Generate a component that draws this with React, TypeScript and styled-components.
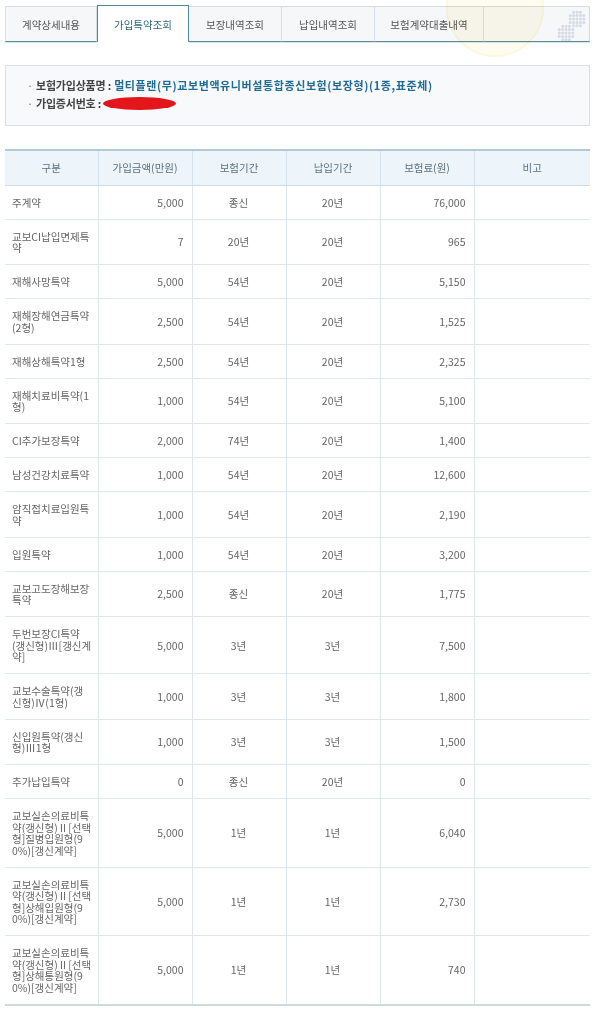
import React from "react";
import styled, { createGlobalStyle } from "styled-components";

const GlobalStyle = createGlobalStyle`
  html, body { margin: 0; padding: 0; background: #ffffff; }
  body { font-family: "Noto Sans CJK KR", "Noto Sans", sans-serif; color: #666; }
  * { box-sizing: border-box; }
`;

const Page = styled.div`
  position: relative;
  width: 600px;
  padding: 5px 10px 0 5px;
`;

const Deco = styled.svg`
  position: absolute;
  left: 420px;
  top: 0;
  width: 180px;
  height: 64px;
  pointer-events: none;
  mix-blend-mode: multiply;
`;

const TabBar = styled.div`
  display: flex;
  align-items: flex-end;
  height: 37px;
`;

const Tab = styled.div<{ $w?: number; $active?: boolean }>`
  flex: ${(p) => (p.$w ? `0 0 ${p.$w}px` : "1 1 auto")};
  height: ${(p) => (p.$active ? "37px" : "36px")};
  display: flex;
  align-items: center;
  justify-content: center;
  font-size: 10.5px;
  color: ${(p) => (p.$active ? "#2f6878" : "#555")};
  background: ${(p) => (p.$active ? "#ffffff" : "rgba(244,246,248,0.85)")};
  border-top: 1px solid ${(p) => (p.$active ? "#4f8a97" : "#d3dde4")};
  border-right: 1px solid ${(p) => (p.$active ? "#4f8a97" : "#d3dde4")};
  border-left: ${(p) => (p.$active ? "1px solid #4f8a97" : "none")};
  border-bottom: ${(p) => (p.$active ? "none" : "1px solid #5b8f9c")};
  box-shadow: ${(p) => (p.$active ? "none" : "0 1px 0 #d7e6ea")};
  &:first-child { border-left: 1px solid #d3dde4; }
`;

const InfoBox = styled.div`
  margin-top: 23px;
  height: 61px;
  border: 1px solid #d9dfe5;
  background: #f8f9fb;
  padding: 10px 20px 12px 21px;
`;

const InfoLine = styled.div`
  display: flex;
  align-items: center;
  height: 18px;
  font-size: 11px;
  font-weight: 700;
  white-space: nowrap;
`;

const Bullet = styled.span`
  width: 9px;
  color: #666;
  font-weight: 400;
`;

const Label = styled.span`
  color: #444;
  letter-spacing: -0.2px;
  margin-right: 3px;
`;

const Value = styled.span`
  color: #1f6b93;
  letter-spacing: 0.6px;
`;

const Redact = styled.span`
  display: inline-block;
  width: 73px;
  height: 13px;
  margin-left: -1px;
  border-radius: 50%;
  background: #e3161c;
`;

const Table = styled.table`
  margin-top: 23px;
  width: 585px;
  border-collapse: collapse;
  table-layout: fixed;
  font-size: 10.5px;
  border-bottom: 2px solid #cfd9e0;
`;

const Th = styled.th`
  height: 35px;
  padding: 0;
  font-weight: 400;
  color: #5e7080;
  background: #edf4fa;
  border-top: 2px solid #b3c9d8;
  border-bottom: 1px solid #cddce7;
  border-right: 1px solid #d5e2ec;
  &:last-child { border-right: none; }
`;

const Td = styled.td<{ $align: "left" | "right" | "center" }>`
  padding: 11px 8px 10.5px 7px;
  line-height: 11.5px;
  text-align: ${(p) => p.$align};
  vertical-align: middle;
  color: #666;
  white-space: nowrap;
  border-bottom: 1px solid #e0e8ef;
  border-right: 1px solid #dde6ee;
  &:last-child { border-right: none; }
`;

type Row = { name: string[]; amount: string; term: string; pay: string; premium: string };

const rows: Row[] = [
  { name: ["주계약"], amount: "5,000", term: "종신", pay: "20년", premium: "76,000" },
  { name: ["교보CI납입면제특", "약"], amount: "7", term: "20년", pay: "20년", premium: "965" },
  { name: ["재해사망특약"], amount: "5,000", term: "54년", pay: "20년", premium: "5,150" },
  { name: ["재해장해연금특약", "(2형)"], amount: "2,500", term: "54년", pay: "20년", premium: "1,525" },
  { name: ["재해상해특약1형"], amount: "2,500", term: "54년", pay: "20년", premium: "2,325" },
  { name: ["재해치료비특약(1", "형)"], amount: "1,000", term: "54년", pay: "20년", premium: "5,100" },
  { name: ["CI추가보장특약"], amount: "2,000", term: "74년", pay: "20년", premium: "1,400" },
  { name: ["남성건강치료특약"], amount: "1,000", term: "54년", pay: "20년", premium: "12,600" },
  { name: ["암직접치료입원특", "약"], amount: "1,000", term: "54년", pay: "20년", premium: "2,190" },
  { name: ["입원특약"], amount: "1,000", term: "54년", pay: "20년", premium: "3,200" },
  { name: ["교보고도장해보장", "특약"], amount: "2,500", term: "종신", pay: "20년", premium: "1,775" },
  { name: ["두번보장CI특약", "(갱신형)Ⅲ[갱신계", "약]"], amount: "5,000", term: "3년", pay: "3년", premium: "7,500" },
  { name: ["교보수술특약(갱", "신형)Ⅳ(1형)"], amount: "1,000", term: "3년", pay: "3년", premium: "1,800" },
  { name: ["신입원특약(갱신", "형)Ⅲ1형"], amount: "1,000", term: "3년", pay: "3년", premium: "1,500" },
  { name: ["추가납입특약"], amount: "0", term: "종신", pay: "20년", premium: "0" },
  { name: ["교보실손의료비특", "약(갱신형)Ⅱ[선택", "형]질병입원형(9", "0%)[갱신계약]"], amount: "5,000", term: "1년", pay: "1년", premium: "6,040" },
  { name: ["교보실손의료비특", "약(갱신형)Ⅱ[선택", "형]상해입원형(9", "0%)[갱신계약]"], amount: "5,000", term: "1년", pay: "1년", premium: "2,730" },
  { name: ["교보실손의료비특", "약(갱신형)Ⅱ[선택", "형]상해통원형(9", "0%)[갱신계약]"], amount: "5,000", term: "1년", pay: "1년", premium: "740" },
];

const tabs = [
  { label: "계약상세내용", w: 92 },
  { label: "가입특약조회", w: 92, active: true },
  { label: "보장내역조회", w: 93 },
  { label: "납입내역조회", w: 93 },
  { label: "보험계약대출내역", w: 109 },
];

const colWidths = [93, 94, 94, 94, 94, 116];
const headers = ["구분", "가입금액(만원)", "보험기간", "납입기간", "보험료(원)", "비고"];

const dots = (cx: number, cy: number) => {
  const out: React.ReactElement[] = [];
  for (let i = -2; i <= 2; i++) {
    for (let j = -2; j <= 2; j++) {
      if (i * i + j * j > 5) continue;
      out.push(<circle key={`${cx}-${i}-${j}`} cx={cx + i * 3.4} cy={cy + j * 3.4} r={1.5} fill="#dde3ea" />);
    }
  }
  return out;
};

export default function App() {
  return (
    <>
      <GlobalStyle />
      <Page>
        <TabBar>
          {tabs.map((t) => (
            <Tab key={t.label} $w={t.w} $active={t.active}>
              {t.label}
            </Tab>
          ))}
          <Tab />
        </TabBar>

        <InfoBox>
          <InfoLine>
            <Bullet>·</Bullet>
            <Label>보험가입상품명 :</Label>
            <Value>멀티플랜(무)교보변액유니버설통합종신보험(보장형)(1종,표준체)</Value>
          </InfoLine>
          <InfoLine>
            <Bullet>·</Bullet>
            <Label>가입증서번호 :</Label>
            <Redact />
          </InfoLine>
        </InfoBox>

        <Table>
          <colgroup>
            {colWidths.map((w, i) => (
              <col key={i} style={{ width: w }} />
            ))}
          </colgroup>
          <thead>
            <tr>
              {headers.map((h) => (
                <Th key={h}>{h}</Th>
              ))}
            </tr>
          </thead>
          <tbody>
            {rows.map((r, idx) => (
              <tr key={idx}>
                <Td $align="left">
                  {r.name.map((l, i) => (
                    <React.Fragment key={i}>
                      {i > 0 && <br />}
                      {l}
                    </React.Fragment>
                  ))}
                </Td>
                <Td $align="right">{r.amount}</Td>
                <Td $align="center">{r.term}</Td>
                <Td $align="center">{r.pay}</Td>
                <Td $align="right">{r.premium}</Td>
                <Td $align="center" />
              </tr>
            ))}
          </tbody>
        </Table>

        <Deco viewBox="0 0 180 64">
          <circle cx={75} cy={8} r={48} fill="#fffae0" stroke="#faf0c0" strokeWidth={2} opacity={0.5} />
          {dots(157, 19)}
          {dots(146, 33)}
        </Deco>
      </Page>
    </>
  );
}
